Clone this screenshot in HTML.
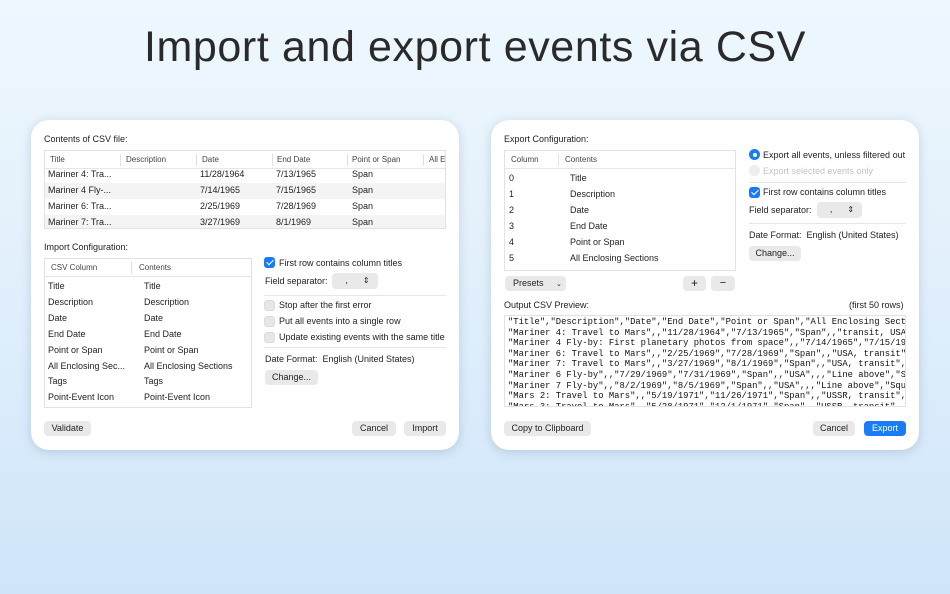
<!DOCTYPE html>
<html><head><meta charset="utf-8"><style>
*{margin:0;padding:0;box-sizing:border-box}
body{width:950px;height:594px;overflow:hidden;background:linear-gradient(180deg,#eef7fd 0%,#e4f1fc 40%,#cfe5fa 100%);font-family:"Liberation Sans",sans-serif;color:#222;position:relative}
.t{position:absolute;font-size:9px;line-height:11px;white-space:nowrap}
.h1{position:absolute;left:0;width:950px;top:23px;text-align:center;font-size:43px;color:#2a2a2a;letter-spacing:0.6px}
.panel{position:absolute;top:120px;width:428px;height:330px;background:#fff;border-radius:18px;box-shadow:0 2px 10px rgba(80,110,140,.25)}
.box{position:absolute;border:1px solid #e2e2e2;background:#fff;overflow:hidden}
.hdr{position:absolute;left:0;right:0;top:0;height:18px;border-bottom:1px solid #e6e6e6}
.sep{position:absolute;top:3px;width:1px;height:12px;background:#e0e0e0}
.gray{position:absolute;left:0;right:0;height:16px;background:#f4f4f5}
.btn{position:absolute;height:15px;background:#e9e9ea;border-radius:4px;font-size:9px;line-height:15px;text-align:center;color:#222}
.cb{position:absolute;width:11px;height:11px;border-radius:3px;background:#e6e6e7;border:1px solid #ddd}
.cb.on{background:#1a7cf5;border-color:#1a7cf5}
.cb.on::after{content:"";position:absolute;left:3px;top:0px;width:3px;height:6px;border:solid #fff;border-width:0 1.6px 1.6px 0;transform:rotate(45deg)}
.div{position:absolute;height:1px;background:#e6e6e6}
.hd{font-size:8px;color:#444}
.mono{position:absolute;font-family:"Liberation Mono",monospace;font-size:8.85px;line-height:10.6px;white-space:pre;color:#111}
</style></head><body>
<div class="h1">Import and export events via CSV</div>

<div class="panel" style="left:31px"></div>
<div class="panel" style="left:491px"></div>

<!-- LEFT -->
<div class="t" style="left:44px;top:134px">Contents of CSV file:</div>
<div class="box" style="left:44px;top:150px;width:402px;height:79px">
 <div class="hdr"></div>
 <div class="sep" style="left:75px"></div><div class="sep" style="left:151px"></div><div class="sep" style="left:227px"></div><div class="sep" style="left:302px"></div><div class="sep" style="left:378px"></div>
 <div class="gray" style="top:32px"></div><div class="gray" style="top:64px"></div>
</div>
<div class="t hd" style="left:50px;top:154px">Title</div>
<div class="t hd" style="left:126px;top:154px">Description</div>
<div class="t hd" style="left:202px;top:154px">Date</div>
<div class="t hd" style="left:277px;top:154px">End Date</div>
<div class="t hd" style="left:352px;top:154px">Point or Span</div>
<div class="t hd" style="left:429px;top:154px">All E</div>
<div class="t" style="left:48px;top:169px">Mariner 4: Tra...</div><div class="t" style="left:200px;top:169px">11/28/1964</div><div class="t" style="left:276px;top:169px">7/13/1965</div><div class="t" style="left:352px;top:169px">Span</div>
<div class="t" style="left:48px;top:185px">Mariner 4 Fly-...</div><div class="t" style="left:200px;top:185px">7/14/1965</div><div class="t" style="left:276px;top:185px">7/15/1965</div><div class="t" style="left:352px;top:185px">Span</div>
<div class="t" style="left:48px;top:201px">Mariner 6: Tra...</div><div class="t" style="left:200px;top:201px">2/25/1969</div><div class="t" style="left:276px;top:201px">7/28/1969</div><div class="t" style="left:352px;top:201px">Span</div>
<div class="t" style="left:48px;top:217px">Mariner 7: Tra...</div><div class="t" style="left:200px;top:217px">3/27/1969</div><div class="t" style="left:276px;top:217px">8/1/1969</div><div class="t" style="left:352px;top:217px">Span</div>

<div class="t" style="left:44px;top:242px">Import Configuration:</div>
<div class="box" style="left:44px;top:258px;width:208px;height:150px">
 <div class="hdr"></div><div class="sep" style="left:86px"></div>
</div>
<div class="t hd" style="left:51px;top:262px">CSV Column</div>
<div class="t hd" style="left:139px;top:262px">Contents</div>
<div class="t" style="left:48px;top:279px;line-height:15.9px">Title<br>Description<br>Date<br>End Date<br>Point or Span<br>All Enclosing Sec...<br>Tags<br>Point-Event Icon</div>
<div class="t" style="left:144px;top:279px;line-height:15.9px">Title<br>Description<br>Date<br>End Date<br>Point or Span<br>All Enclosing Sections<br>Tags<br>Point-Event Icon</div>

<div class="cb on" style="left:264px;top:257px"></div>
<div class="t" style="left:279px;top:258px">First row contains column titles</div>
<div class="t" style="left:265px;top:276px">Field separator:</div>
<div class="btn" style="left:332px;top:273px;width:46px;height:16px">&nbsp;&nbsp;,&nbsp;&nbsp;&nbsp;&nbsp;&nbsp;&nbsp;<span style="font-size:8px">⇕</span></div>
<div class="div" style="left:264px;top:295px;width:182px"></div>
<div class="cb" style="left:264px;top:300px"></div><div class="t" style="left:279px;top:300px">Stop after the first error</div>
<div class="cb" style="left:264px;top:316px"></div><div class="t" style="left:279px;top:316px">Put all events into a single row</div>
<div class="cb" style="left:264px;top:332px"></div><div class="t" style="left:279px;top:332px">Update existing events with the same title</div>
<div class="div" style="left:264px;top:347px;width:182px"></div>
<div class="t" style="left:265px;top:354px">Date Format:&nbsp;&nbsp;English (United States)</div>
<div class="btn" style="left:265px;top:370px;width:53px">Change...</div>
<div class="btn" style="left:44px;top:421px;width:47px">Validate</div>
<div class="btn" style="left:352px;top:421px;width:44px">Cancel</div>
<div class="btn" style="left:404px;top:421px;width:42px">Import</div>

<!-- RIGHT -->
<div class="t" style="left:504px;top:134px">Export Configuration:</div>
<div class="box" style="left:504px;top:150px;width:232px;height:121px">
 <div class="hdr"></div><div class="sep" style="left:53px"></div>
</div>
<div class="t hd" style="left:511px;top:154px">Column</div>
<div class="t hd" style="left:565px;top:154px">Contents</div>
<div class="t" style="left:509px;top:171px;line-height:15.9px">0<br>1<br>2<br>3<br>4<br>5</div>
<div class="t" style="left:570px;top:171px;line-height:15.9px">Title<br>Description<br>Date<br>End Date<br>Point or Span<br>All Enclosing Sections</div>
<div class="btn" style="left:505px;top:276px;width:61px;text-align:left;padding-left:8px">Presets&nbsp;&nbsp;&nbsp;&nbsp;&nbsp;<span style="font-size:7px">⌄</span></div>
<div class="btn" style="left:683px;top:276px;width:23px;font-size:12px">+</div>
<div class="btn" style="left:711px;top:276px;width:24px;font-size:11px">−</div>

<div style="position:absolute;left:749px;top:149px;width:11px;height:11px;border-radius:50%;background:#1a7cf5"><div style="position:absolute;left:3.5px;top:3.5px;width:4px;height:4px;border-radius:50%;background:#fff"></div></div>
<div class="t" style="left:763px;top:150px">Export all events, unless filtered out</div>
<div style="position:absolute;left:749px;top:165px;width:11px;height:11px;border-radius:50%;background:#eee"></div>
<div class="t" style="left:763px;top:166px;color:#c4c4c4">Export selected events only</div>
<div class="div" style="left:749px;top:182px;width:157px"></div>
<div class="cb on" style="left:749px;top:187px"></div>
<div class="t" style="left:763px;top:187px">First row contains column titles</div>
<div class="t" style="left:749px;top:205px">Field separator:</div>
<div class="btn" style="left:817px;top:202px;width:45px;height:16px">&nbsp;&nbsp;,&nbsp;&nbsp;&nbsp;&nbsp;&nbsp;&nbsp;<span style="font-size:8px">⇕</span></div>
<div class="div" style="left:749px;top:223px;width:157px"></div>
<div class="t" style="left:749px;top:230px">Date Format:&nbsp;&nbsp;English (United States)</div>
<div class="btn" style="left:749px;top:246px;width:52px">Change...</div>

<div class="t" style="left:504px;top:300px">Output CSV Preview:</div>
<div class="t" style="left:849px;top:300px">(first 50 rows)</div>
<div class="box" style="left:504px;top:315px;width:402px;height:92px">
<div class="mono" style="left:3px;top:1px">"Title","Description","Date","End Date","Point or Span","All Enclosing Sect
"Mariner 4: Travel to Mars",,"11/28/1964","7/13/1965","Span",,"transit, USA
"Mariner 4 Fly-by: First planetary photos from space",,"7/14/1965","7/15/19
"Mariner 6: Travel to Mars",,"2/25/1969","7/28/1969","Span",,"USA, transit"
"Mariner 7: Travel to Mars",,"3/27/1969","8/1/1969","Span",,"USA, transit",
"Mariner 6 Fly-by",,"7/29/1969","7/31/1969","Span",,"USA",,,"Line above","S
"Mariner 7 Fly-by",,"8/2/1969","8/5/1969","Span",,"USA",,,"Line above","Squ
"Mars 2: Travel to Mars",,"5/19/1971","11/26/1971","Span",,"USSR, transit",
"Mars 3: Travel to Mars",,"5/28/1971","12/1/1971","Span",,"USSR, transit",</div>
</div>
<div class="btn" style="left:504px;top:421px;width:87px">Copy to Clipboard</div>
<div class="btn" style="left:813px;top:421px;width:42px">Cancel</div>
<div class="btn" style="left:864px;top:421px;width:42px;background:#1a7cf5;color:#fff">Export</div>
</body></html>
